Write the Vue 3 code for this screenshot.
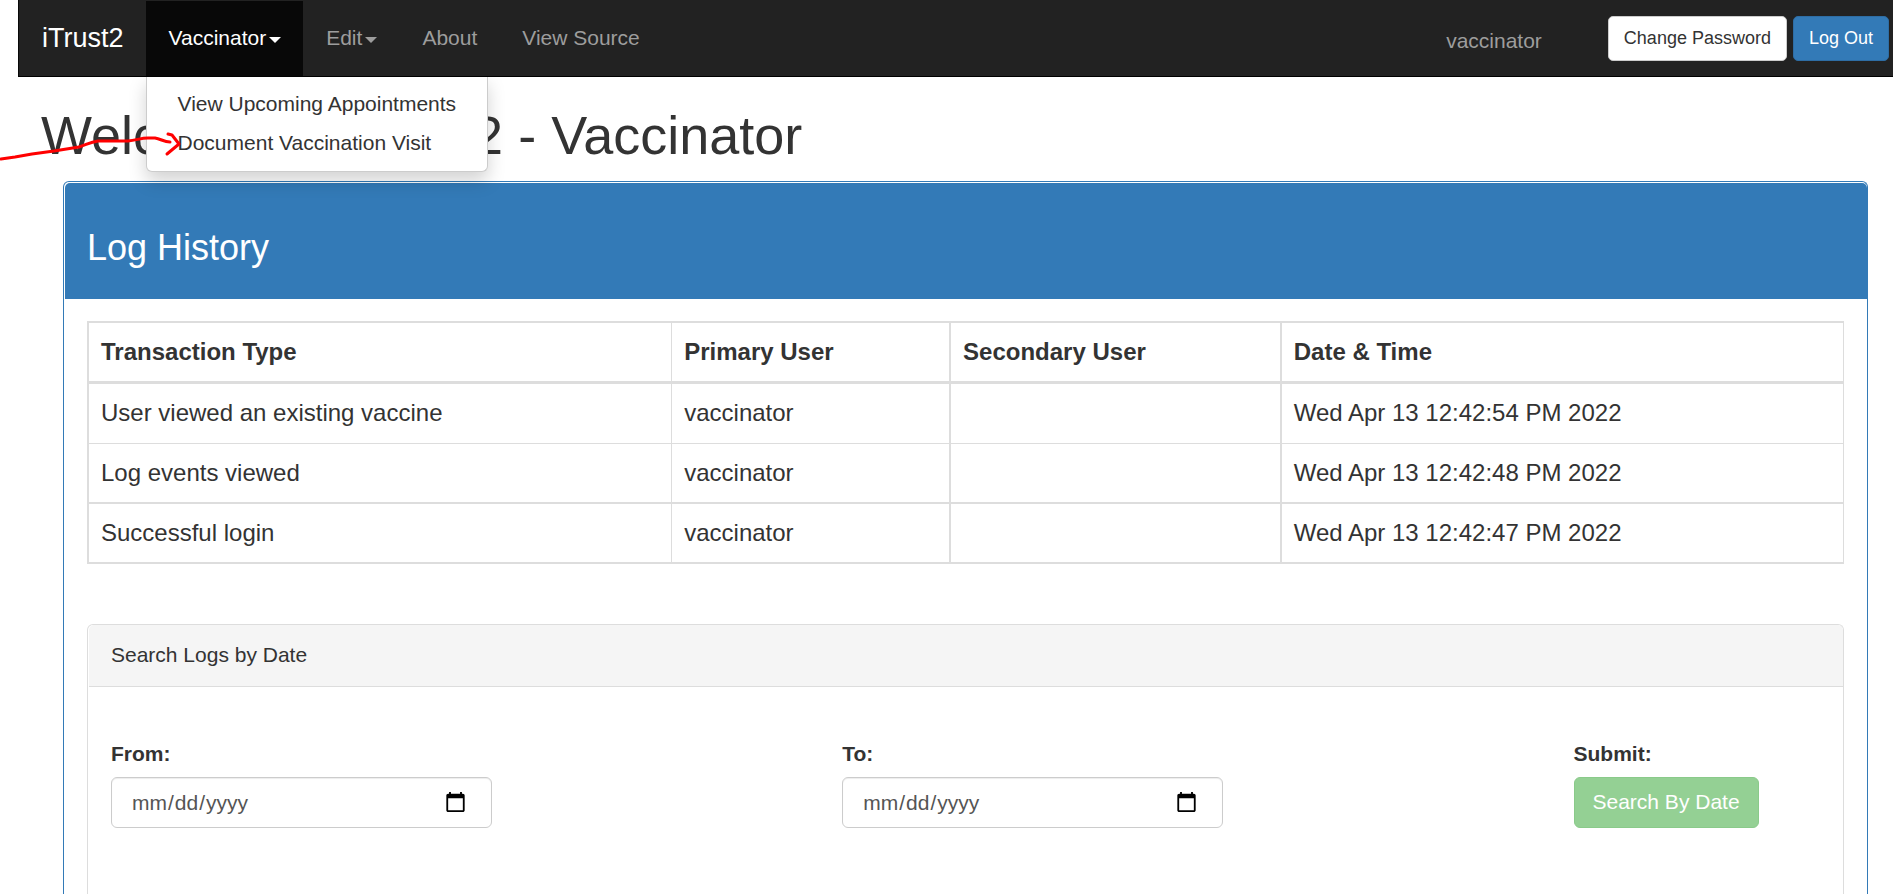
<script setup>
import { ref } from 'vue'

const menuItems = ['View Upcoming Appointments', 'Document Vaccination Visit']
const columns = ['Transaction Type', 'Primary User', 'Secondary User', 'Date & Time']
const logs = [
  { type: 'User viewed an existing vaccine', primary: 'vaccinator', secondary: '', time: 'Wed Apr 13 12:42:54 PM 2022' },
  { type: 'Log events viewed', primary: 'vaccinator', secondary: '', time: 'Wed Apr 13 12:42:48 PM 2022' },
  { type: 'Successful login', primary: 'vaccinator', secondary: '', time: 'Wed Apr 13 12:42:47 PM 2022' },
]
const from = ref('')
const to = ref('')
const menuOpen = ref(true)
</script>

<template>
  <div class="page">
    <nav class="navbar">
      <a class="brand" href="#">iTrust2</a>
      <ul class="nav">
        <li class="dropdown">
          <button type="button" class="nav-link active" :aria-expanded="menuOpen" @click="menuOpen = !menuOpen">
            Vaccinator<span class="caret"></span>
          </button>
          <ul v-if="menuOpen" class="menu">
            <li v-for="item in menuItems" :key="item"><a href="#">{{ item }}</a></li>
          </ul>
        </li>
        <li><button type="button" class="nav-link">Edit<span class="caret"></span></button></li>
        <li><a class="nav-link" href="#">About</a></li>
        <li><a class="nav-link" href="#">View Source</a></li>
      </ul>
      <div class="account">
        <span class="user">vaccinator</span>
        <button type="button" class="btn">Change Password</button>
        <button type="button" class="btn primary">Log Out</button>
      </div>
    </nav>

    <h1>Welcome to iTrust2 - Vaccinator</h1>

    <section class="panel">
      <div class="panel-heading"><h3>Log History</h3></div>
      <div class="panel-body">
        <table>
          <colgroup>
            <col class="c-type" /><col class="c-primary" /><col class="c-secondary" /><col />
          </colgroup>
          <thead>
            <tr><th v-for="c in columns" :key="c" scope="col">{{ c }}</th></tr>
          </thead>
          <tbody>
            <tr v-for="log in logs" :key="log.time">
              <td>{{ log.type }}</td>
              <td>{{ log.primary }}</td>
              <td>{{ log.secondary }}</td>
              <td>{{ log.time }}</td>
            </tr>
          </tbody>
        </table>

        <section class="search">
          <div class="search-heading">Search Logs by Date</div>
          <form class="search-form" @submit.prevent>
            <div class="field">
              <label for="from">From:</label>
              <input id="from" v-model="from" type="date" />
            </div>
            <div class="field">
              <label for="to">To:</label>
              <input id="to" v-model="to" type="date" />
            </div>
            <div class="field">
              <label for="submit">Submit:</label>
              <button id="submit" type="submit" class="submit" disabled>Search By Date</button>
            </div>
          </form>
        </section>
      </div>
    </section>

    <svg class="arrow" width="182" height="164" viewBox="0 0 182 164" aria-hidden="true">
      <path d="M1 159 L15 157 L32 154 L54 151 L79 147 C86 145 90 142 98 141 L128 141 C137 140 141 138 148 138 L155 138 C161 139 164 142 170 142" />
      <path d="M168 134 L172 135 L179 144 L173 149 L167 154" />
    </svg>
  </div>
</template>

<style>
html, body { margin: 0; background: #fff; }
</style>

<style scoped>
* { box-sizing: border-box; }
.page {
  position: relative;
  display: flex;
  flex-direction: column;
  min-height: 100vh;
  font-family: "Liberation Sans", Arial, sans-serif;
  font-size: 21px;
  line-height: 30px;
  color: #333;
}
button, input { font: inherit; }
a { text-decoration: none; }
ul { list-style: none; margin: 0; padding: 0; }

.navbar {
  display: flex;
  margin-left: 18px;
  padding-top: 1px;
  height: 77px;
  background: #222;
  border-left: 1px solid #080808;
  border-bottom: 1px solid #000;
}
.brand { padding: 22px 22px 22px 23px; font-size: 27px; color: #fff; }
.nav { display: flex; }
.nav-link {
  display: flex;
  align-items: center;
  height: 75px;
  padding: 0 22px 1px 23px;
  border: 0;
  background: none;
  color: #9d9d9d;
}
.nav-link.active { background: #080808; color: #fff; }
.caret {
  margin: 4px 0 0 3px;
  border: 6px solid transparent;
  border-top-color: currentColor;
  border-bottom: 0;
}
.dropdown { position: relative; }
.menu {
  position: absolute;
  z-index: 5;
  top: 100%;
  left: 0;
  padding: 9px 0 8px;
  background: #fff;
  border: 1px solid #ccc;
  border-top: 0;
  border-radius: 0 0 6px 6px;
  box-shadow: 0 9px 18px rgba(0, 0, 0, 0.175);
  clip-path: inset(1px -40px -40px -40px);
}
.menu a { display: block; padding: 4px 31px 5px; white-space: nowrap; color: #333; }
.account { display: flex; align-items: flex-start; margin-left: auto; padding: 15px 4px 0 0; gap: 6px; }
.user { margin: 10px 60px 0 0; color: #9d9d9d; }
.btn {
  height: 45px;
  padding: 0 15px 2px;
  font-size: 18px;
  color: #333;
  background: #fff;
  border: 1px solid #ccc;
  border-radius: 5px;
}
.btn.primary { color: #fff; background: #337ab7; border-color: #2e6da4; }

h1 { margin: 28px 41px 16px; font-size: 54px; line-height: 60px; font-weight: 500; }

.panel {
  display: flex;
  flex-direction: column;
  flex: 1;
  margin: 0 25px 0 63px;
  border: 1px solid #337ab7;
  border-bottom: 0;
  border-radius: 6px 6px 0 0;
}
.panel-heading {
  margin: 1px 0 0 1px;
  padding: 45px 22px 31px;
  background: #337ab7;
  border-radius: 5px 5px 0 0;
  color: #fff;
}
h3 { margin: 0; font-size: 36px; line-height: 40px; font-weight: 500; }
.panel-body { display: flex; flex-direction: column; flex: 1; padding: 22px 23px 0; }

table {
  width: 100%;
  table-layout: fixed;
  border-spacing: 0;
  border: solid #ddd;
  border-width: 2px 1px 0 2px;
  font-size: 24px;
  line-height: 34px;
}
.c-type { width: 33.25%; }
.c-primary { width: 15.9%; }
.c-secondary { width: 18.85%; }
th, td {
  height: 60px;
  padding: 0 12px;
  border-bottom: 2px solid #ddd;
  text-align: left;
}
th { height: 61px; border-bottom-width: 3px; }
tbody tr:first-child td { padding-bottom: 1px; border-bottom-width: 1px; }
th:nth-child(1), td:nth-child(1) { border-right: 1px solid #ddd; }
th:nth-child(2), td:nth-child(2), th:nth-child(3), td:nth-child(3) { border-right: 2px solid #ddd; }

.search {
  flex: 1;
  margin-top: 60px;
  border: 1px solid #ddd;
  border-bottom: 0;
  border-radius: 6px 6px 0 0;
}
.search-heading {
  margin-left: 1px;
  padding: 15px 22px 16px;
  background: #f5f5f5;
  border-bottom: 1px solid #ddd;
  border-radius: 5px 5px 0 0;
}
.search-form { display: grid; grid-template-columns: 5fr 5fr 2fr; padding: 52px 0 64px; }
.field { display: flex; flex-direction: column; align-items: flex-start; gap: 8px; padding-left: 23px; }
label { font-weight: 700; }
input {
  width: 381px;
  max-width: 100%;
  height: 51px;
  padding: 8px 22px 8px 19px;
  color: #555;
  background: #fff;
  border: 1px solid #ccc;
  border-radius: 6px;
  box-shadow: inset 0 1px 1px rgba(0, 0, 0, 0.075);
}
input::-webkit-calendar-picker-indicator { width: 23px; height: 23px; padding: 2px; }
.submit {
  height: 51px;
  padding: 0 18px 1px;
  color: #fff;
  background: #5cb85c;
  border: 1px solid #4cae4c;
  border-radius: 6px;
  opacity: 0.65;
}
.arrow { position: absolute; z-index: 10; top: 0; left: 0; pointer-events: none; }
.arrow path { fill: none; stroke: #f00; stroke-width: 3; stroke-linejoin: round; stroke-linecap: round; }
</style>
